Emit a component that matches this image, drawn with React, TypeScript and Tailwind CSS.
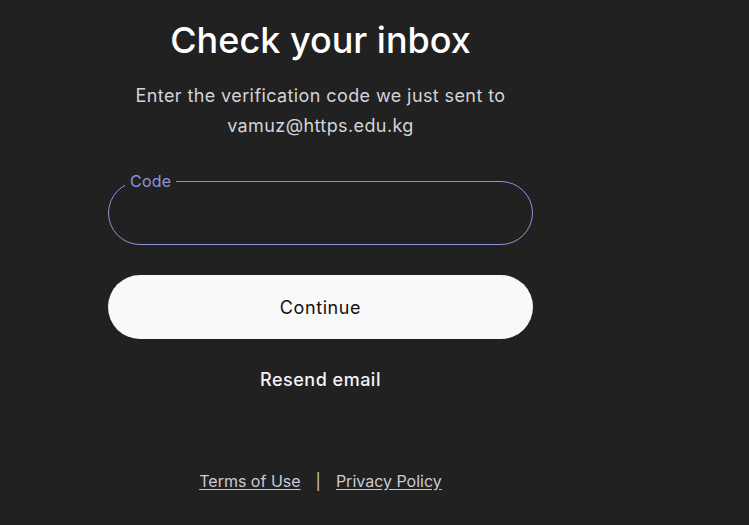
import React from "react";

export default function App() {
  return (
    <div
      className="w-[749px] h-[525px] bg-[#212121] overflow-hidden"
      style={{ fontFamily: "Inter, 'Noto Sans', sans-serif" }}
    >
      <div className="ml-[108px] w-[425px] flex flex-col items-center pt-[20px]">
        <h1 className="text-[36px] leading-[40px] font-medium text-white tracking-[0px]">
          Check your inbox
        </h1>
        <p className="mt-[21px] text-[18px] leading-[30px] text-[#d4d4d8] text-center tracking-[0.4px]">
          Enter the verification code we just sent to
          <br />
          vamuz@https.edu.kg
        </p>
        <div className="relative mt-[40px] w-full">
          <div className="h-[64px] w-full rounded-full border border-[#8b96dc]" />
          <span className="absolute left-[17px] top-[-10px] px-[5px] bg-[#212121] text-[16px] leading-[20px] text-[#8b96dc] tracking-[0.2px]">
            Code
          </span>
        </div>
        <button className="mt-[30px] h-[64px] w-full rounded-full bg-[#f9f9f9] text-[18px] text-[#111111] tracking-[0.6px]">
          Continue
        </button>
        <div className="mt-[29px] text-[18px] leading-[24px] text-[#f3f3f3] font-medium tracking-[0.5px]">
          Resend email
        </div>
        <div className="mt-[78px] flex items-center gap-[15px] text-[16px] leading-[22px] text-[#c9ccd4]">
          <span className="underline underline-offset-2">Terms of Use</span>
          <span>|</span>
          <span className="underline underline-offset-2">Privacy Policy</span>
        </div>
      </div>
    </div>
  );
}
